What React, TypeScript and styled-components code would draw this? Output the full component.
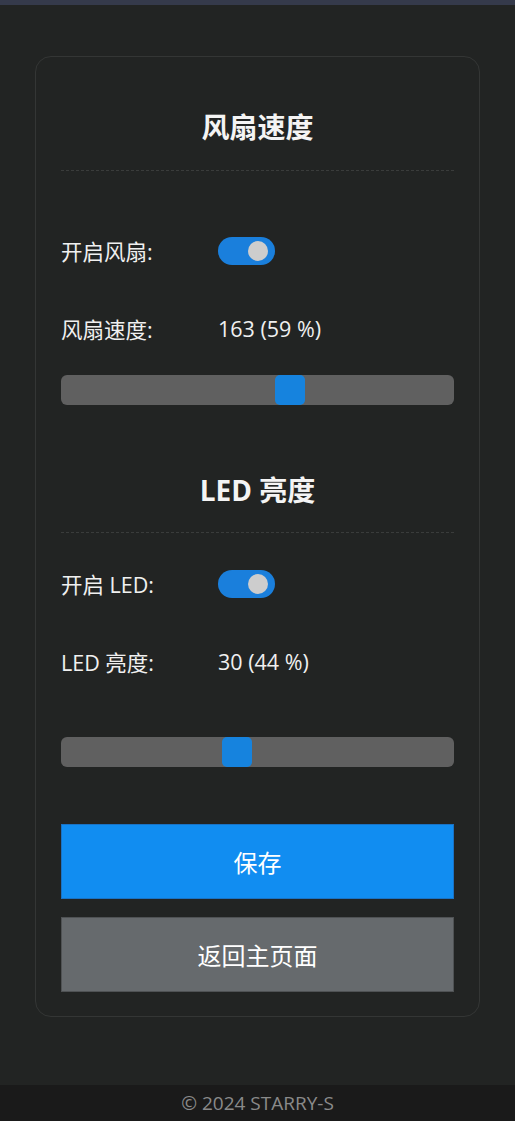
import React from "react";
import styled, { createGlobalStyle } from "styled-components";

const Global = createGlobalStyle`
  html, body { margin: 0; padding: 0; background: #222423; }
  body { font-family: "Open Sans", "Noto Sans CJK SC", sans-serif; color: #f2f2f2; }
`;

const TopBar = styled.div`
  height: 5px;
  background: #353a4b;
`;

const Main = styled.main`
  padding: 51px 35px 68px 35px;
`;

const Card = styled.section`
  border: 1px solid #343635;
  border-radius: 16px;
  padding: 0 25px 24px;
  display: flex;
  flex-direction: column;
`;

const Title = styled.h2<{ $top: number }>`
  margin: ${(p) => p.$top}px 0 0;
  font-size: 28px;
  line-height: 34px;
  font-weight: 700;
  text-align: center;
  color: #f4f4f4;
`;

const Divider = styled.hr<{ $top: number }>`
  margin: ${(p) => p.$top}px 0 0;
  border: none;
  border-top: 1px dashed #3a3c3b;
  height: 0;
`;

const Row = styled.div<{ $top: number; $h: number }>`
  margin-top: ${(p) => p.$top}px;
  height: ${(p) => p.$h}px;
  display: grid;
  grid-template-columns: 157px 1fr;
  align-items: center;
  font-size: 21.5px;
  line-height: 30px;
`;

const Label = styled.span`
  color: #f0f0f0;
  padding-top: 2px;
`;

const Value = styled.span`
  color: #f0f0f0;
`;

const Toggle = styled.span`
  position: relative;
  display: block;
  width: 57px;
  height: 28px;
  border-radius: 14px;
  background: #1a7fdc;
`;

const Knob = styled.span`
  position: absolute;
  left: 30px;
  top: 4px;
  width: 20px;
  height: 20px;
  border-radius: 50%;
  background: #cdcdcd;
`;

const Track = styled.div<{ $top: number }>`
  position: relative;
  margin-top: ${(p) => p.$top}px;
  height: 30px;
  border-radius: 6px;
  background: #606060;
`;

const Thumb = styled.div`
  position: absolute;
  top: 0;
  width: 30px;
  height: 30px;
  border-radius: 5px;
  background: #1683de;
`;

const Button = styled.button<{ $top: number; $variant: "primary" | "secondary" }>`
  margin-top: ${(p) => p.$top}px;
  height: 75px;
  width: 100%;
  border: 1px solid ${(p) => (p.$variant === "primary" ? "#1a72c4" : "#4f5254")};
  background: ${(p) => (p.$variant === "primary" ? "#118df1" : "#666a6d")};
  color: #ffffff;
  font-family: "Open Sans", "Noto Sans CJK SC", sans-serif;
  font-size: 24px;
  padding: 0;
  cursor: pointer;
`;

const Footer = styled.footer`
  height: 36px;
  background: #1a1a1a;
  color: #8a8a8a;
  font-size: 19px;
  line-height: 36px;
  text-align: center;
`;

function Slider({ top, left }: { top: number; left: number }) {
  return (
    <Track $top={top}>
      <Thumb style={{ left }} />
    </Track>
  );
}

export default function App() {
  return (
    <>
      <Global />
      <TopBar />
      <Main>
        <Card>
          <Title $top={53}>风扇速度</Title>
          <Divider $top={26} />
          <Row $top={64} $h={28}>
            <Label>开启风扇:</Label>
            <Toggle>
              <Knob />
            </Toggle>
          </Row>
          <Row $top={50} $h={30}>
            <Label>风扇速度:</Label>
            <Value>163 (59 %)</Value>
          </Row>
          <Slider top={32} left={214} />

          <Title $top={68}>LED 亮度</Title>
          <Divider $top={25} />
          <Row $top={35} $h={28}>
            <Label>开启 LED:</Label>
            <Toggle>
              <Knob />
            </Toggle>
          </Row>
          <Row $top={50} $h={30}>
            <Label>LED 亮度:</Label>
            <Value>30 (44 %)</Value>
          </Row>
          <Slider top={61} left={161} />

          <Button $top={57} $variant="primary">保存</Button>
          <Button $top={18} $variant="secondary">返回主页面</Button>
        </Card>
      </Main>
      <Footer>© 2024 STARRY-S</Footer>
    </>
  );
}
